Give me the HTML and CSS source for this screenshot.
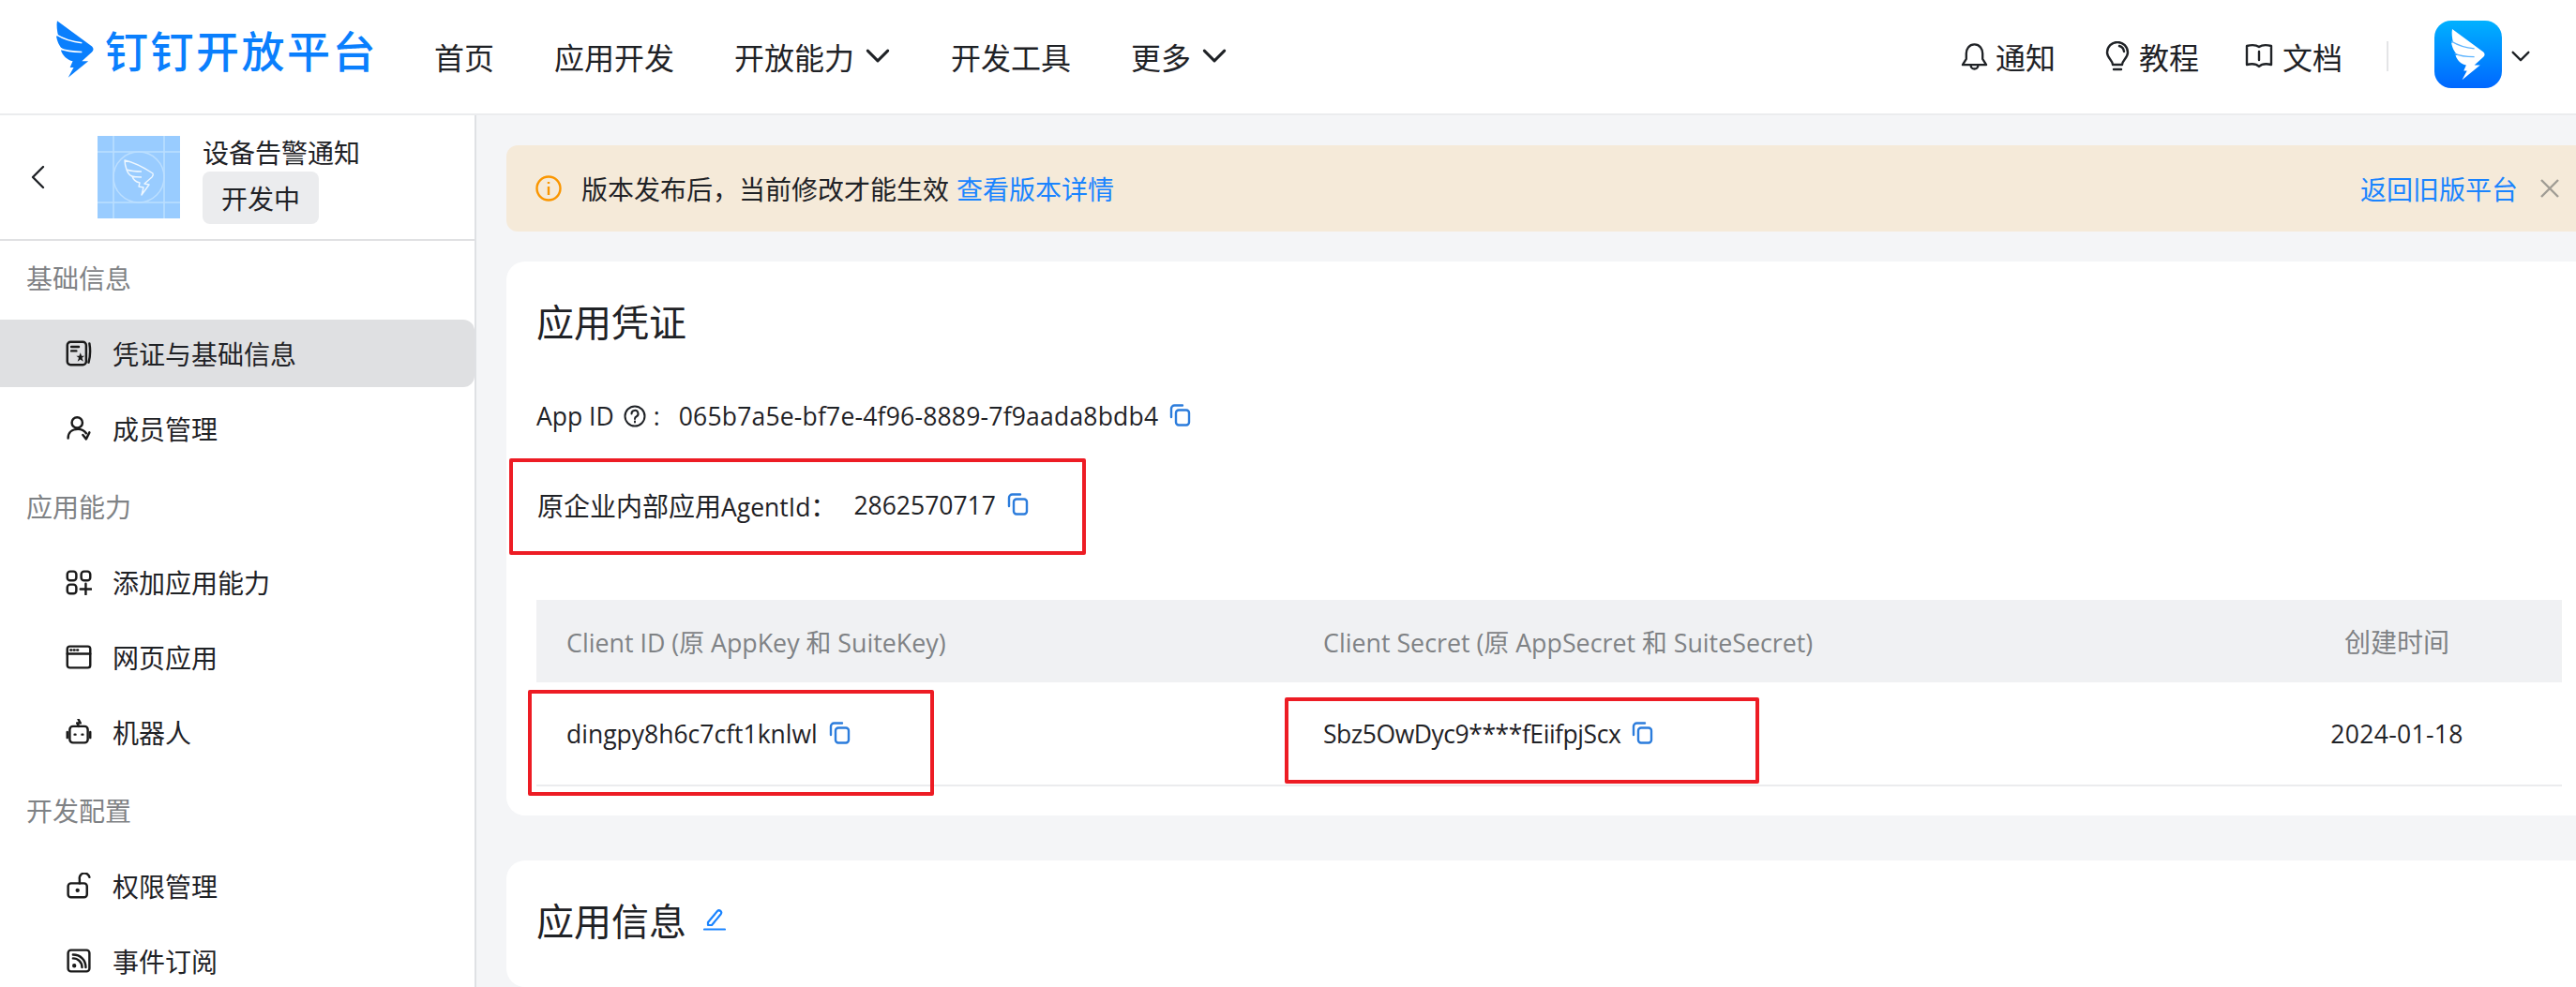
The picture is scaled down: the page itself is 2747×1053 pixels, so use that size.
FILE: index.html

```html
<!DOCTYPE html>
<html lang="en">

<head>
    <meta charset="UTF-8">
    <meta name="viewport" content="width=device-width, initial-scale=1.0">
    <title>设备告警通知</title>
    <link rel="stylesheet" href="styles.css">
</head>

<body>
    <svg class="defs" width="0" height="0">
        <symbol id="wing" viewBox="0 0 42 64">
            <path fill="currentColor" d="M1 1 L39 29 Q42 32 39 35 L28 45 H35 L13 63 L19 52 H15 L18 45 C12 44 7 39 5 33 L8 33 C3 29 1 23 0 18 L2 17 C1 12 0 6 1 1 Z" />
            <path fill="none" stroke="var(--feather)" stroke-width="1.5" d="M0 16 C8 21 18 24 28 25 M4 31 C10 34 18 35 28 35" />
        </symbol>
        <symbol id="copy" viewBox="0 0 24 24">
            <path fill="none" stroke="#2b7cdc" stroke-width="2.4" stroke-linecap="round" d="M3 14 V5 A3.5 3.5 0 0 1 6.5 1.500 H15" />
            <rect x="8" y="6.500" width="14" height="16" rx="3" fill="none" stroke="#2b7cdc" stroke-width="2.4" />
        </symbol>
        <symbol id="chevron" viewBox="0 0 24 14">
            <path fill="none" stroke="currentColor" stroke-width="2.800" stroke-linecap="round" stroke-linejoin="round" d="M2 2 L12 12 L22 2" />
        </symbol>
    </svg>

    <header class="topbar">
        <div class="logo">
            <svg class="logo-wing"><use href="#wing" /></svg>
            <span class="logo-text">钉钉开放平台</span>
        </div>
        <nav class="nav">
            <a class="nav-item">首页</a>
            <a class="nav-item">应用开发</a>
            <a class="nav-item">开放能力<svg class="nav-chevron"><use href="#chevron" /></svg></a>
            <a class="nav-item">开发工具</a>
            <a class="nav-item">更多<svg class="nav-chevron"><use href="#chevron" /></svg></a>
        </nav>
        <div class="top-tools">
            <a class="tool tool-notice">
                <svg class="tool-icon" width="29" height="30" viewBox="0 0 30 30">
                    <path d="M15 2 C9 2 6 7 6 12 V18 L2 24.500 H28 L24 18 V12 C24 7 21 2 15 2 Z M11 25 A4 4 0 0 0 19 25" />
                </svg>
                通知
            </a>
            <a class="tool">
                <svg class="tool-icon" width="26" height="32" viewBox="0 0 26 32">
                    <path d="M8 25 C8 20 2 18 2 12 A11 11 0 0 1 24 12 C24 18 18 20 18 25 Z M9 30 H17 M15 5 A7 7 0 0 1 20 11" />
                </svg>
                教程
            </a>
            <a class="tool">
                <svg class="tool-icon" width="30" height="28" viewBox="0 0 30 28">
                    <path d="M15 4 C12 2 6 2 2 3 V23 C6 22 12 22 15 25 C18 22 24 22 28 23 V3 C24 2 18 2 15 4 Z M15 9 V18" />
                </svg>
                文档
            </a>
            <span class="tool-divider"></span>
            <div class="user">
                <div class="user-avatar"><svg class="user-wing"><use href="#wing" /></svg></div>
                <svg class="user-chevron"><use href="#chevron" /></svg>
            </div>
        </div>
    </header>

    <div class="layout">
        <aside class="sidebar">
            <div class="app-head">
                <svg class="back" width="16" height="26" viewBox="0 0 16 26">
                    <path d="M14 2 L3 13 L14 24" />
                </svg>
                <svg class="app-avatar" width="88" height="88" viewBox="0 0 88 88">
                    <rect width="88" height="88" fill="#99ccff" />
                    <path class="app-grid" d="M17 0 V88 M71 0 V88 M0 17 H88 M0 71 H88" />
                    <circle class="app-grid" cx="44" cy="44" r="27" />
                    <path class="app-mark" d="M29 26 C38 28 50 34 59 40 Q60 42 58 44 L50 51 L55 52 L47 63 L49 55 L44 54 L45 50 C41 49 38 47 37 43 C34 42 32 39 31 36 C30 33 29 30 29 26 Z M31 36 C37 38 42 38 47 38 M36 43 C40 44 44 44 47 44" />
                </svg>
                <div class="app-info">
                    <div class="app-name">设备告警通知</div>
                    <span class="app-tag">开发中</span>
                </div>
            </div>

            <div class="menu">
                <div class="menu-group">
                    <div class="menu-label">基础信息</div>
                    <a class="menu-item active">
                        <svg class="menu-icon" viewBox="0 0 32 32">
                            <rect x="2" y="2" width="23" height="28" rx="4" />
                            <path d="M7 8 H16 M7 13 H13 M29 4 C30 10 30 20 28 27" />
                            <path class="solid" d="M18 15 L19.500 19 H23 L20 21.500 L21.500 26 L18 23.500 L14.500 26 L16 21.500 L13 19 H16.500 Z" />
                        </svg>
                        凭证与基础信息
                    </a>
                    <a class="menu-item">
                        <svg class="menu-icon" viewBox="0 0 32 32">
                            <circle cx="14" cy="9" r="6.500" />
                            <path d="M3 28 C3 21 8 17 15 17 C19 17 23 19 25 22 M21 24 L25 29 L29 21" />
                        </svg>
                        成员管理
                    </a>
                </div>
                <div class="menu-group">
                    <div class="menu-label">应用能力</div>
                    <a class="menu-item">
                        <svg class="menu-icon" viewBox="0 0 32 32">
                            <rect x="2" y="3" width="11" height="11" rx="3.500" />
                            <rect x="19" y="3" width="11" height="11" rx="3.500" />
                            <rect x="2" y="19" width="11" height="11" rx="3.500" />
                            <path d="M24.500 18 V31 M18 24.500 H31" />
                        </svg>
                        添加应用能力
                    </a>
                    <a class="menu-item">
                        <svg class="menu-icon" viewBox="0 0 32 32">
                            <rect x="2" y="3" width="28" height="26" rx="3" />
                            <path d="M2 12 H30 M6 7.500 H7 M10 7.500 H11 M14 7.500 H15" />
                        </svg>
                        网页应用
                    </a>
                    <a class="menu-item">
                        <svg class="menu-icon" viewBox="0 0 32 32">
                            <rect x="5" y="9" width="22" height="20" rx="4" />
                            <path d="M16 9 L14 5 L18 5 L15.500 0.500 M2 16 V23 M30 16 V23 M11 19 H12 M20 19 H21" />
                        </svg>
                        机器人
                    </a>
                </div>
                <div class="menu-group">
                    <div class="menu-label">开发配置</div>
                    <a class="menu-item">
                        <svg class="menu-icon" viewBox="0 0 32 32">
                            <rect x="3" y="13" width="23" height="17" rx="3.500" />
                            <path d="M17 13 V8 A6 6 0 0 1 29 5.500" />
                            <path class="solid" d="M14.500 19 A2.500 2.500 0 1 0 14.501 24 A2.500 2.500 0 1 0 14.500 19 Z" />
                        </svg>
                        权限管理
                    </a>
                    <a class="menu-item">
                        <svg class="menu-icon" viewBox="0 0 32 32">
                            <rect x="3" y="3" width="26" height="26" rx="3.500" />
                            <path d="M9 13 C15 13 20 18 20 24 M9 8.500 C18 8.500 24.500 15 24.500 24" />
                            <path class="solid" d="M10.500 19.500 A2.500 2.500 0 1 0 10.501 24.500 A2.500 2.500 0 1 0 10.500 19.500 Z" />
                        </svg>
                        事件订阅
                    </a>
                </div>
            </div>
        </aside>

        <main class="content">
            <div class="banner">
                <svg class="banner-icon" width="28" height="28" viewBox="0 0 28 28">
                    <circle cx="14" cy="14" r="12.500" />
                    <path d="M14 12 V21 M14 7 V9" />
                </svg>
                <span>版本发布后，当前修改才能生效</span>
                <a class="link banner-link">查看版本详情</a>
                <a class="link banner-back">返回旧版平台</a>
                <svg class="banner-close" width="22" height="22" viewBox="0 0 22 22">
                    <path d="M2 2 L20 20 M20 2 L2 20" />
                </svg>
            </div>

            <section class="card card-cred">
                <h2 class="card-title">应用凭证</h2>
                <div class="info-row app-row">
                    <span class="en">App ID</span>
                    <svg class="help" width="24" height="24" viewBox="0 0 24 24">
                        <circle cx="12" cy="12" r="10.500" />
                        <path d="M8.500 9.500 A3.500 3.500 0 1 1 13.500 12.500 C12.500 13 12 13.500 12 15 M12 17.500 V18.500" />
                    </svg>
                    <span class="en colon">:</span>
                    <span class="en app-id">065b7a5e-bf7e-4f96-8889-7f9aada8bdb4</span>
                    <svg class="copy"><use href="#copy" /></svg>
                </div>
                <div class="info-row agent-row">
                    <span>原企业内部应用<span class="en">AgentId</span>：</span>
                    <span class="en agent-value">2862570717</span>
                    <svg class="copy"><use href="#copy" /></svg>
                </div>

                <div class="table">
                    <div class="table-head">
                        <div class="cell">Client ID (原 AppKey 和 SuiteKey)</div>
                        <div class="cell">Client Secret (原 AppSecret 和 SuiteSecret)</div>
                        <div class="cell cell-center cell-cn">创建时间</div>
                    </div>
                    <div class="table-row">
                        <div class="cell"><span class="en">dingpy8h6c7cft1knlwl</span><svg class="copy"><use href="#copy" /></svg></div>
                        <div class="cell"><span class="en secret">Sbz5OwDyc9****fEiifpjScx</span><svg class="copy"><use href="#copy" /></svg></div>
                        <div class="cell cell-center"><span class="en date">2024-01-18</span></div>
                    </div>
                </div>
            </section>

            <section class="card card-info">
                <h2 class="card-title">应用信息
                    <svg class="edit" width="24" height="24" viewBox="0 0 24 24">
                        <path d="M5 15 L15 3 Q16.500 1.500 18.500 3 Q20 4.500 18.500 6.500 L9 18 H5 Z M1 22.500 H23" />
                    </svg>
                </h2>
            </section>
        </main>
    </div>

    <!-- red marks drawn over the screenshot -->
    <div class="mark mark-agent"></div>
    <div class="mark mark-client"></div>
    <div class="mark mark-secret"></div>
</body>

</html>
```

FILE: styles.css

```css
* {
    box-sizing: border-box;
}

body {
    margin: 0;
    width: 2747px;
    height: 1053px;
    overflow: hidden;
    position: relative;
    background-color: #f4f5f7;
    color: #1f2226;
    font-family: "Noto Sans CJK SC", "Open Sans", sans-serif;
    font-size: 28px;
}

.defs {
    position: absolute;
}

.en {
    font-family: "Open Sans", "Noto Sans CJK SC", sans-serif;
    font-size: 26.5px;
}

.link {
    color: #1a84ff;
}

/* top bar */
.topbar {
    display: flex;
    align-items: center;
    height: 123px;
    padding: 0 49px 2px 60px;
    background-color: white;
    border-bottom: 2px solid #ebecee;
}

.logo {
    display: flex;
    flex: none;
    align-items: center;
    width: 340px;
    height: 64px;
    margin-top: -15px;
    color: #0a7ffd;
}

.logo-wing {
    flex: none;
    width: 41px;
    height: 63px;
    --feather: white;
}

.logo-text {
    flex: none;
    margin-left: 11px;
    font-size: 46px;
    font-weight: 500;
    letter-spacing: 2.5px;
    white-space: nowrap;
    line-height: 60px;
}

.nav {
    display: flex;
    align-items: center;
    gap: 64px;
    margin-left: 63px;
}

.nav-item {
    display: flex;
    align-items: center;
    font-size: 32px;
}

.nav-chevron {
    width: 26px;
    height: 15px;
    margin-left: 12px;
    margin-right: 1px;
}

.top-tools {
    display: flex;
    align-items: center;
    gap: 49px;
    margin-left: auto;
}

.tool {
    display: flex;
    align-items: center;
    gap: 10px;
    font-size: 32px;
}

.tool-notice {
    gap: 8px;
    margin-right: 4px;
}

.tool-icon {
    fill: none;
    stroke: #1f2226;
    stroke-width: 2.4;
    stroke-linejoin: round;
    stroke-linecap: round;
}

.tool-divider {
    width: 2px;
    height: 32px;
    margin-left: -2px;
    background-color: #e4e5e7;
}

.user {
    display: flex;
    align-items: center;
    gap: 10px;
}

.user-avatar {
    display: flex;
    align-items: center;
    justify-content: center;
    width: 72px;
    height: 72px;
    margin-top: -4px;
    border-radius: 18px;
    background: linear-gradient(#00b1ff, #0067ff);
    color: white;
}

.user-wing {
    flex: none;
    width: 37px;
    height: 56px;
    --feather: #5cb4ff;
}

.user-chevron {
    width: 20px;
    height: 12px;
}

/* page body */
.layout {
    display: flex;
    height: 930px;
    overflow: hidden;
}

.sidebar {
    flex: none;
    width: 508px;
    overflow: hidden;
    background-color: white;
    border-right: 2px solid #dfe1e4;
}

.app-head {
    display: flex;
    align-items: center;
    height: 134px;
    padding-left: 32px;
    border-bottom: 2px solid #e0e1e3;
}

.back {
    fill: none;
    stroke: #1f2226;
    stroke-width: 2.4;
    stroke-linecap: round;
    stroke-linejoin: round;
}

.app-avatar {
    margin-left: 56px;
}

.app-grid {
    fill: none;
    stroke: #bcdfff;
    stroke-width: 1.5;
}

.app-mark {
    fill: none;
    stroke: #eef7ff;
    stroke-width: 1.4;
    stroke-linejoin: round;
}

.app-info {
    margin-left: 24px;
}

.app-name {
    margin-bottom: -2px;
    line-height: 46px;
}

.app-tag {
    display: block;
    width: 124px;
    height: 56px;
    border-radius: 8px;
    background-color: #ebecee;
    text-align: center;
    line-height: 56px;
}

.menu {
    padding-top: 19px;
}

.menu-group {
    display: flex;
    flex-direction: column;
    gap: 8px;
}

.menu-group + .menu-group {
    margin-top: 27px;
}

.menu-label {
    margin-bottom: 17px;
    padding-left: 28px;
    color: #7f8285;
    line-height: 40px;
}

.menu-item {
    display: flex;
    flex: none;
    align-items: center;
    gap: 22px;
    height: 72px;
    padding-left: 70px;
    border-radius: 0 12px 12px 0;
}

.menu-item.active {
    background-color: #dfe0e2;
}

.menu-icon {
    width: 28px;
    height: 28px;
    fill: none;
    stroke: #1a1a1a;
    stroke-width: 2.8;
    stroke-linecap: round;
    stroke-linejoin: round;
}

.menu-icon .solid {
    fill: #1a1a1a;
    stroke: none;
}

/* right side */
.content {
    flex: 1;
    min-width: 0;
    padding: 32px 0 0 32px;
}

.banner {
    display: flex;
    align-items: center;
    height: 92px;
    margin-right: -20px;
    padding: 0 37px 0 31px;
    border-radius: 12px;
    background-color: #f5ead9;
}

.banner-icon {
    margin-right: 21px;
    fill: none;
    stroke: #fa9600;
    stroke-width: 2.4;
}

.banner-link {
    margin-left: 8px;
}

.banner-back {
    margin-left: auto;
}

.banner-close {
    margin-left: 23px;
    fill: none;
    stroke: #a09c94;
    stroke-width: 2.4;
}

.card {
    margin-right: -20px;
    padding: 35px 35px 31px 32px;
    border-radius: 20px;
    background-color: white;
}

.card-cred {
    margin-top: 32px;
}

.card-info {
    margin-top: 48px;
    height: 135px;
}

.card-title {
    display: flex;
    align-items: center;
    margin: 0;
    font-size: 40px;
    font-weight: 400;
    line-height: 56px;
}

.edit {
    margin-left: 18px;
    fill: none;
    stroke: #1a84ff;
    stroke-width: 2.2;
    stroke-linejoin: round;
    stroke-linecap: round;
}

.info-row {
    display: flex;
    align-items: center;
    height: 40px;
}

.app-row {
    margin-top: 54px;
}

.app-id {
    letter-spacing: 0.2px;
}

.agent-row {
    margin-top: 55px;
    padding-left: 1px;
}

.help {
    margin-left: 10px;
    fill: none;
    stroke: #1f2226;
    stroke-width: 2;
    stroke-linecap: round;
}

.colon {
    margin: 0 20px 0 8px;
}

.agent-value {
    margin-left: 18px;
}

.copy {
    flex: none;
    width: 24px;
    height: 24px;
    margin-left: 11px;
    transform: translateY(-1px);
}

.table {
    margin-top: 81px;
}

.table-head,
.table-row {
    display: grid;
    grid-template-columns: 807px 1fr 352px;
    align-items: center;
}

.table-head {
    height: 88px;
    background-color: #f0f1f3;
    color: #7f8285;
    font-family: "Open Sans", "Noto Sans CJK SC", sans-serif;
    font-size: 26.8px;
}

.table-row {
    height: 111px;
    border-bottom: 2px solid #ebecee;
}

.cell {
    display: flex;
    align-items: center;
    padding-left: 32px;
    white-space: pre;
}

.cell-center {
    justify-content: center;
    padding-left: 0;
}

.cell-cn {
    font-family: "Noto Sans CJK SC", sans-serif;
    font-size: 28px;
}

.secret {
    letter-spacing: -0.45px;
}

.date {
    letter-spacing: 0.3px;
}

/* red marks */
.mark {
    position: absolute;
    border: 4px solid #ed1c24;
    border-radius: 2px;
}

.mark-agent {
    left: 543px;
    top: 489px;
    width: 615px;
    height: 103px;
}

.mark-client {
    left: 563px;
    top: 736px;
    width: 433px;
    height: 113px;
}

.mark-secret {
    left: 1370px;
    top: 744px;
    width: 506px;
    height: 92px;
}
```
